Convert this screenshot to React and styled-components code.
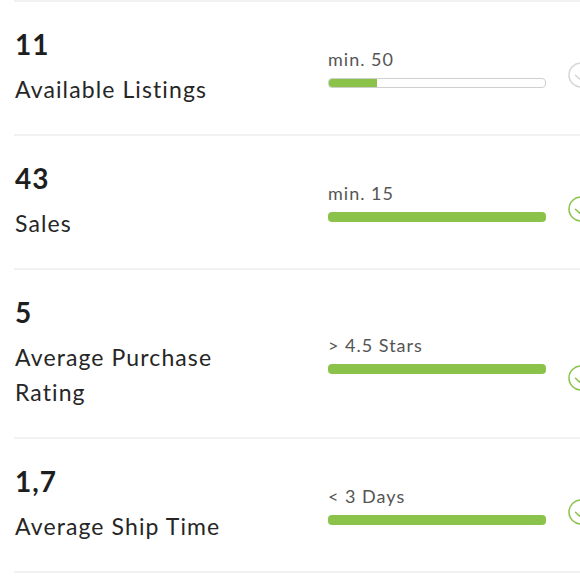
import React from 'react'
import styled, { createGlobalStyle } from 'styled-components'

const GlobalStyle = createGlobalStyle`
  html, body {
    margin: 0;
    padding: 0;
    background: #fff;
    overflow: hidden;
  }
  body {
    font-family: Lato, "Open Sans", sans-serif;
    color: #222;
  }
`

const stats = [
  { value: '11', label: 'Available Listings', target: 'min. 50', pct: 22 },
  { value: '43', label: 'Sales', target: 'min. 15', pct: 100 },
  { value: '5', label: 'Average Purchase Rating', target: '> 4.5 Stars', pct: 100 },
  { value: '1,7', label: 'Average Ship Time', target: '< 3 Days', pct: 100 },
]

function CheckCircle({ done }) {
  const c = done ? '#8bc34a' : '#d6d6d6'
  return (
    <Icon viewBox="0 0 26 26" width="26" height="26">
      <circle cx="13" cy="13" r="12" fill="none" stroke={c} strokeWidth="1.5" />
      <path d="M7.5 13.2 L11.4 17 L18.5 9.6" fill="none" stroke={c} strokeWidth="1.5" strokeLinecap="round" strokeLinejoin="round" />
    </Icon>
  )
}

function StatRow({ data }) {
  const done = data.pct >= 100
  return (
    <Row>
      <Left>
        <Value>{data.value}</Value>
        <Label>{data.label}</Label>
      </Left>
      <Right>
        <Target>{data.target}</Target>
        <Bar $done={done}>
          <Fill style={{ width: data.pct + '%' }} />
        </Bar>
      </Right>
      <CheckCircle done={done} />
    </Row>
  )
}

export default function App() {
  return (
    <>
      <GlobalStyle />
      <List>
        {stats.map((s) => (
          <StatRow key={s.value} data={s} />
        ))}
      </List>
    </>
  )
}

const List = styled.div`
  width: 580px;
  border-top: 2px solid #f2f2f2;
  margin-left: 14px;
  overflow: hidden;
`
const Row = styled.div`
  display: flex;
  align-items: center;
  padding: 28px 0 27px 1px;
  border-bottom: 2px solid #f2f2f2;
`
const Left = styled.div`
  width: 313px;
  flex-shrink: 0;
`
const Value = styled.div`
  font-size: 28px;
  font-weight: 700;
  line-height: 28px;
  letter-spacing: 1px;
  color: #1e1e1e;
`
const Label = styled.div`
  margin-top: 14px;
  font-size: 23px;
  line-height: 35px;
  letter-spacing: 1.1px;
  color: #262626;
  width: 250px;
`
const Right = styled.div`
  width: 218px;
  flex-shrink: 0;
`
const Target = styled.div`
  font-size: 18px;
  line-height: 20px;
  letter-spacing: 1px;
  color: #555;
  margin-bottom: 9px;
`
const Bar = styled.div`
  height: 10px;
  border-radius: 4px;
  box-sizing: border-box;
  border: ${(p) => (p.$done ? 'none' : '1px solid #cfcfcf')};
  background: ${(p) => (p.$done ? '#8bc34a' : '#fff')};
  overflow: hidden;
`
const Fill = styled.div`
  height: 100%;
  background: #8bc34a;
`
const Icon = styled.svg`
  flex-shrink: 0;
  align-self: flex-end;
  margin-left: 22px;
  margin-bottom: 19px;
`
